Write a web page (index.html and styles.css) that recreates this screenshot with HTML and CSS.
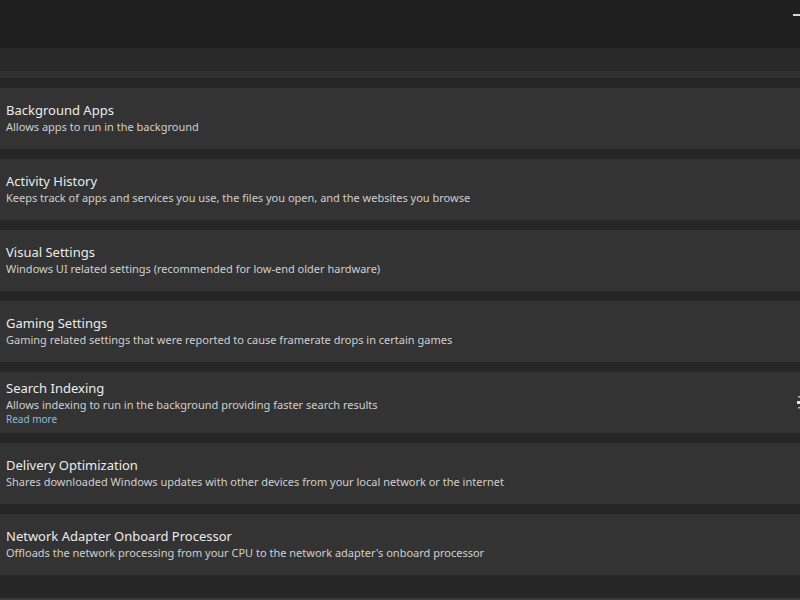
FILE: index.html
```html
<!DOCTYPE html>
<html lang="en">
<head>
    <meta charset="UTF-8">
    <title>Optimize</title>
    <link rel="stylesheet" href="styles.css">
</head>
<body>
    <div id="barra-superior">
        <span class="boton-ventana"></span>
    </div>

    <div id="lista">
        <div class="tarjeta tarjeta-cortada"></div>
        <div class="franja"></div>

        <div class="tarjeta">
            <div class="texto">
                <div class="titulo">Background Apps</div>
                <div class="descripcion">Allows apps to run in the background</div>
            </div>
        </div>

        <div class="tarjeta">
            <div class="texto">
                <div class="titulo">Activity History</div>
                <div class="descripcion">Keeps track of apps and services you use, the files you open, and the websites you browse</div>
            </div>
        </div>

        <div class="tarjeta">
            <div class="texto">
                <div class="titulo">Visual Settings</div>
                <div class="descripcion">Windows UI related settings (recommended for low-end older hardware)</div>
            </div>
        </div>

        <div class="tarjeta">
            <div class="texto">
                <div class="titulo">Gaming Settings</div>
                <div class="descripcion">Gaming related settings that were reported to cause framerate drops in certain games</div>
            </div>
        </div>

        <div class="tarjeta">
            <div class="texto">
                <div class="titulo">Search Indexing</div>
                <div class="descripcion">Allows indexing to run in the background providing faster search results</div>
                <a class="leer-mas" href="#">Read more</a>
            </div>
            <!-- borde izquierdo del control, el resto queda fuera de la ventana -->
            <svg class="control-cortado" width="4" height="13" viewBox="0 0 4 13">
                <rect x="1" y="0" width="3" height="1.5" fill="#b8b8b8"/>
                <rect x="0" y="5" width="4" height="3" fill="#e6e6e6"/>
                <rect x="1" y="11" width="3" height="1.5" fill="#b8b8b8"/>
            </svg>
        </div>

        <div class="tarjeta">
            <div class="texto">
                <div class="titulo">Delivery Optimization</div>
                <div class="descripcion">Shares downloaded Windows updates with other devices from your local network or the internet</div>
            </div>
        </div>

        <div class="tarjeta">
            <div class="texto">
                <div class="titulo">Network Adapter Onboard Processor</div>
                <div class="descripcion">Offloads the network processing from your CPU to the network adapter's onboard processor</div>
            </div>
        </div>
    </div>
</body>
</html>
```

FILE: styles.css
```css
* {
    margin: 0;
    padding: 0;
    box-sizing: border-box;
}

html, body {
    width: 800px;
    height: 600px;
    overflow: hidden;
    background-color: #262626;
    font-family: "Noto Sans", "Open Sans", sans-serif;
    color: #e6e6e6;
}

#barra-superior {
    height: 48px;
    background-color: #1f1f1f;
    display: flex;
    justify-content: flex-end;
    align-items: flex-start;
}

.boton-ventana {
    width: 7px;
    height: 2px;
    margin-top: 14px;
    background-color: #d8d8d8;
}

#lista {
    display: flex;
    flex-direction: column;
    gap: 10px;
    border-bottom: 2px solid #3a3a3a;
    height: 552px;
}

.tarjeta {
    height: 61px;
    flex-shrink: 0;
    background-color: #333333;
    display: flex;
    align-items: center;
    justify-content: space-between;
    padding-left: 6px;
    overflow: hidden;
}

.tarjeta-cortada {
    height: 22px;
    background-color: #292929;
}

.franja {
    height: 7px;
    flex-shrink: 0;
    margin-top: -9px;
    background-color: #303030;
}

.titulo {
    font-size: 13px;
    line-height: 17px;
    color: #ececec;
}

.descripcion {
    font-size: 11px;
    line-height: 16px;
    color: #cfcfcf;
}

.leer-mas {
    display: block;
    font-size: 10px;
    line-height: 12px;
    color: #8fb8dc;
    text-decoration: none;
}

.control-cortado {
    flex-shrink: 0;
    margin-right: -1px;
}
```
